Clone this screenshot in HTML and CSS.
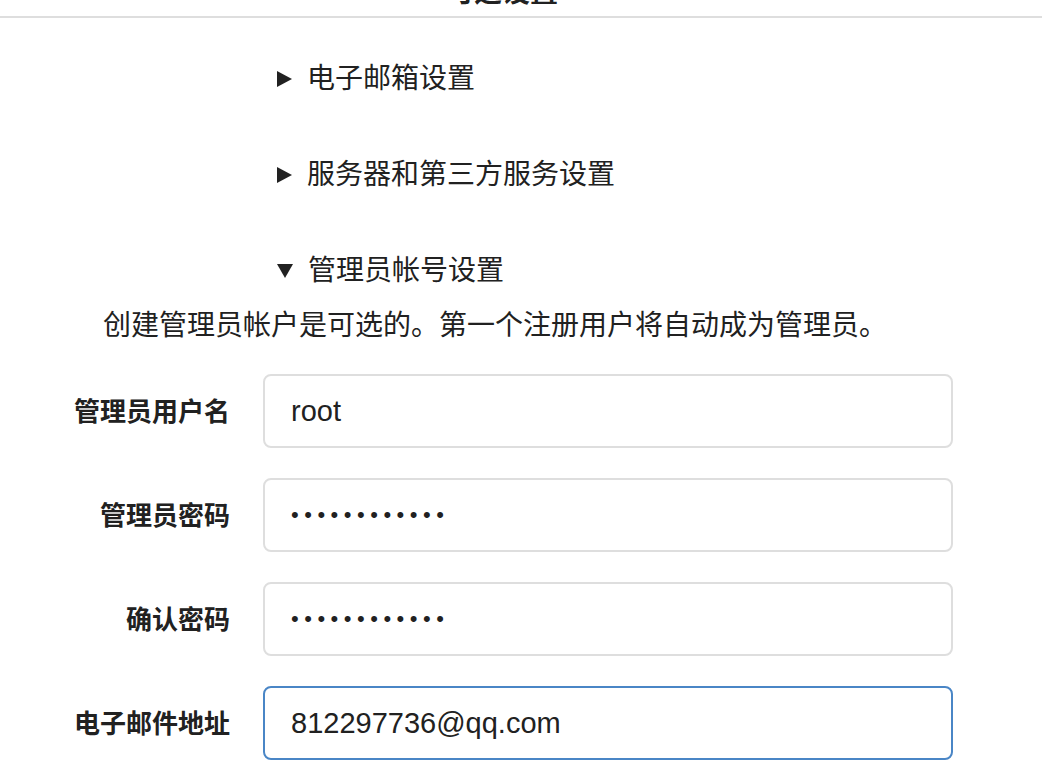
FILE: index.html
```html
<!DOCTYPE html>
<html lang="zh-CN">
<head>
    <meta charset="UTF-8">
    <meta name="viewport" content="width=device-width, initial-scale=1.0">
    <title>安装页面 - 可选设置</title>
    <link rel="stylesheet" href="styles.css">
</head>
<body>
    <div class="install">
        <h4 class="section-title">可选设置</h4>

        <details class="optional">
            <summary>电子邮箱设置</summary>
        </details>

        <details class="optional">
            <summary>服务器和第三方服务设置</summary>
        </details>

        <details class="optional" open>
            <summary>管理员帐号设置</summary>
            <p class="help">创建管理员帐户是可选的。第一个注册用户将自动成为管理员。</p>

            <div class="form">
                <div class="field">
                    <label for="admin_name">管理员用户名</label>
                    <input id="admin_name" type="text" value="root">
                </div>
                <div class="field">
                    <label for="admin_passwd">管理员密码</label>
                    <input id="admin_passwd" class="secret" type="password" value="rootpassword">
                </div>
                <div class="field">
                    <label for="admin_confirm">确认密码</label>
                    <input id="admin_confirm" class="secret" type="password" value="rootpassword">
                </div>
                <div class="field">
                    <label for="admin_email">电子邮件地址</label>
                    <input id="admin_email" class="focused" type="email" value="812297736@qq.com">
                </div>
            </div>
        </details>
    </div>
</body>
</html>
```

FILE: styles.css
```css
:root {
    --text-main: #212121;
    --border-light: #dedede;
    --border-focus: #4a86c6;
}

html, body {
    margin: 0;
    padding: 0;
    background: #fff;
    overflow: hidden;
}

body {
    font-family: "Liberation Sans", "Noto Sans CJK SC", sans-serif;
    color: var(--text-main);
}

.install {
    width: 1042px;
}

/* page is scrolled, heading is cut at the top */
.section-title {
    margin: -24px 0 0;
    padding: 0 38px 6px 0;
    font-size: 28px;
    line-height: 34px;
    font-weight: bold;
    text-align: center;
    border-bottom: 2px solid var(--border-light);
}

.optional summary {
    list-style: none;
    display: flex;
    align-items: center;
    gap: 15px;
    margin-left: 277px;
    font-size: 28px;
    line-height: 40px;
    cursor: pointer;
}

.optional summary::-webkit-details-marker {
    display: none;
}

.optional summary::before {
    content: '';
    width: 0;
    height: 0;
    border-left: 15px solid var(--text-main);
    border-top: 8.5px solid transparent;
    border-bottom: 8.5px solid transparent;
}

.optional[open] summary::before {
    border-left: 8px solid transparent;
    border-right: 8px solid transparent;
    border-top: 14px solid var(--text-main);
    border-bottom: 0;
}

.optional:first-of-type summary {
    margin-top: 41px;
}

.optional + .optional summary {
    margin-top: 56px;
}

.help {
    margin: 15px 0 0 103px;
    font-size: 28px;
    line-height: 40px;
}

.form {
    display: flex;
    flex-direction: column;
    gap: 30px;
    margin-top: 28px;
}

.field {
    display: grid;
    grid-template-columns: 230px 690px;
    column-gap: 33px;
    align-items: center;
}

.field label {
    text-align: right;
    font-size: 26px;
    line-height: 36px;
    font-weight: bold;
    margin-top: 2px;
}

.field input {
    box-sizing: border-box;
    height: 74px;
    padding: 0 26px;
    border: 2px solid var(--border-light);
    border-radius: 8px;
    font-family: "Liberation Sans", sans-serif;
    font-size: 29px;
    color: var(--text-main);
    outline: none;
    background: #fff;
}

.field input.secret {
    font-size: 22px;
    letter-spacing: 5.5px;
}

.field input.focused {
    border-color: var(--border-focus);
}
```
